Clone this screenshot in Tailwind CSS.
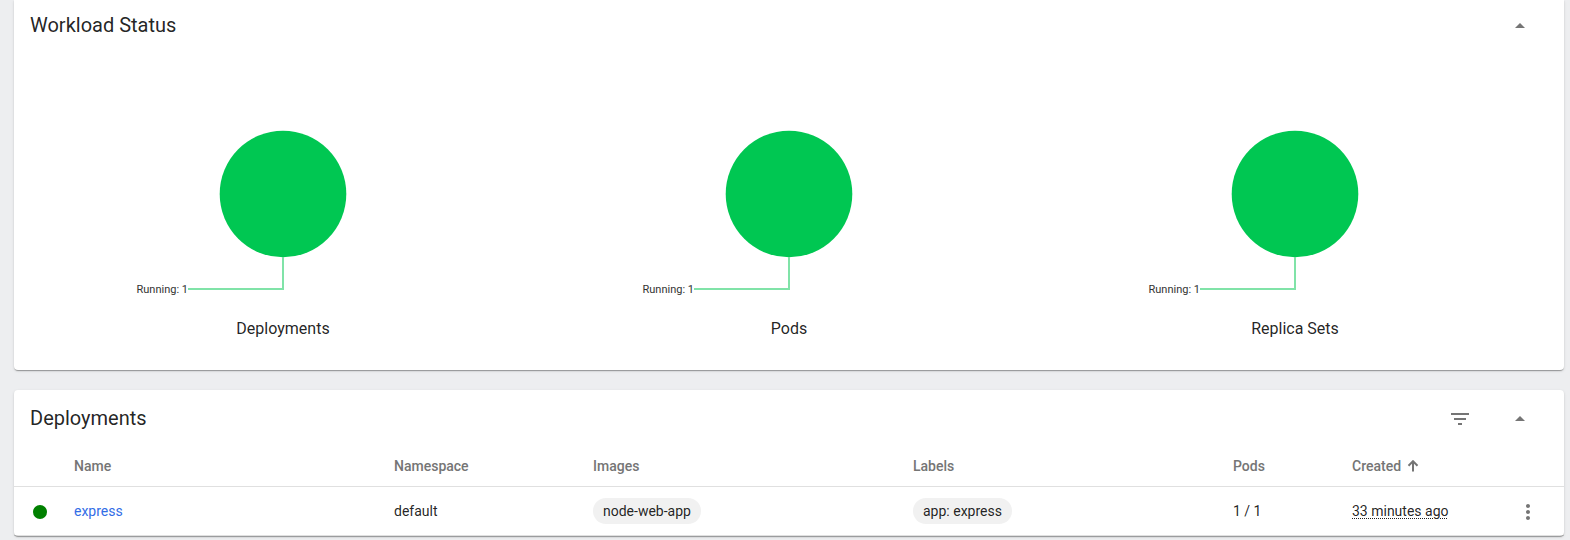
<!DOCTYPE html>
<html lang="en">
<head>
<meta charset="utf-8">
<meta name="viewport" content="width=device-width, initial-scale=1">
<title>Workloads</title>
<script src="https://cdn.jsdelivr.net/npm/@tailwindcss/browser@4"></script>
</head>
<body class="min-h-screen bg-[#edeef0] font-[Roboto,sans-serif] text-sm text-black/87">
<svg class="hidden" aria-hidden="true">
  <symbol id="collapse" viewBox="0 0 24 24"><path d="M7 14l5-5 5 5z"/></symbol>
  <symbol id="pie" viewBox="0 0 300 180">
    <circle cx="150" cy="73" r="63.3" fill="#00c752"/>
    <path d="M150 136V168H55" fill="none" stroke="#80e3a8" stroke-width="2"/>
  </symbol>
</svg>
<main class="flex flex-col gap-5 pr-1.5 pl-3.5">
  <section class="rounded-b bg-white shadow-[0_2px_1px_-1px_rgba(0,0,0,.2),0_1px_1px_rgba(0,0,0,.14),0_1px_3px_rgba(0,0,0,.12)]">
    <header class="flex h-[52px] items-center justify-between pr-6 pl-4">
      <h2 class="pb-0.5 text-xl">Workload Status</h2>
      <button type="button" aria-label="Collapse workload status" class="flex size-10 items-center justify-center text-[#757575]"><svg class="size-6 fill-current"><use href="#collapse"/></svg></button>
    </header>
    <div class="grid grid-cols-3 px-4 pt-[69px] pb-[29px]">
      <figure class="flex flex-col items-center gap-4">
        <svg class="h-[180px] w-[300px]" role="img" aria-label="Deployments, running: 1"><use href="#pie"/><text x="55" y="172" text-anchor="end" font-size="11" fill="#333">Running: 1</text></svg>
        <figcaption class="text-base">Deployments</figcaption>
      </figure>
      <figure class="flex flex-col items-center gap-4">
        <svg class="h-[180px] w-[300px]" role="img" aria-label="Pods, running: 1"><use href="#pie"/><text x="55" y="172" text-anchor="end" font-size="11" fill="#333">Running: 1</text></svg>
        <figcaption class="text-base">Pods</figcaption>
      </figure>
      <figure class="flex flex-col items-center gap-4">
        <svg class="h-[180px] w-[300px]" role="img" aria-label="Replica Sets, running: 1"><use href="#pie"/><text x="55" y="172" text-anchor="end" font-size="11" fill="#333">Running: 1</text></svg>
        <figcaption class="text-base">Replica Sets</figcaption>
      </figure>
    </div>
  </section>

  <section class="rounded bg-white shadow-[0_2px_1px_-1px_rgba(0,0,0,.2),0_1px_1px_rgba(0,0,0,.14),0_1px_3px_rgba(0,0,0,.12)]">
    <header class="flex h-14 items-center justify-between pr-6 pl-4">
      <h2 class="text-xl">Deployments</h2>
      <div class="flex gap-5 pt-0.5 text-[#757575]">
        <button type="button" aria-label="Filter" class="flex size-10 items-center justify-center"><svg class="size-6 fill-current" viewBox="0 0 24 24"><path d="M10 18h4v-2h-4v2zM3 6v2h18V6H3zm3 7h12v-2H6v2z"/></svg></button>
        <button type="button" aria-label="Collapse deployments" class="flex size-10 items-center justify-center"><svg class="size-6 fill-current"><use href="#collapse"/></svg></button>
      </div>
    </header>
    <table class="block w-full">
      <thead class="block">
        <tr class="grid h-[41px] grid-cols-[60px_320fr_199fr_320fr_320fr_119fr_152fr_60px] items-center border-b border-black/12 text-left text-[#757575]">
          <th aria-label="Status"></th>
          <th class="font-medium">Name</th>
          <th class="font-medium">Namespace</th>
          <th class="font-medium">Images</th>
          <th class="font-medium">Labels</th>
          <th class="font-medium">Pods</th>
          <th class="font-medium" aria-sort="ascending"><button type="button" class="flex items-center gap-1.5">Created
            <svg class="size-3" viewBox="0 0 12 12" fill="none" stroke="currentColor" stroke-width="2"><path d="M6 11.500V1.500M1.500 5.700L6 1.200L10.500 5.700"/></svg></button></th>
          <th aria-label="Actions"></th>
        </tr>
      </thead>
      <tbody class="block">
        <tr class="grid h-[49px] grid-cols-[60px_320fr_199fr_320fr_320fr_119fr_152fr_60px] items-center border-b border-black/12">
          <td class="pt-0.5 pl-[19px]"><svg class="size-3.5" viewBox="0 0 14 14" role="img" aria-label="Running"><circle cx="7" cy="7" r="7" fill="green"/></svg></td>
          <td><a href="#express" class="text-[#326de6]">express</a></td>
          <td>default</td>
          <td><span class="inline-flex h-[26px] items-center rounded-full bg-[#f1f1f1] px-2.5">node-web-app</span></td>
          <td><span class="inline-flex h-[26px] items-center rounded-full bg-[#f1f1f1] px-2.5">app: express</span></td>
          <td>1 / 1</td>
          <td><time class="underline decoration-dotted decoration-1 underline-offset-2">33 minutes ago</time></td>
          <td class="pt-0.5 pl-3"><button type="button" aria-label="Actions for express" class="block text-[#757575]"><svg class="size-6 fill-current" viewBox="0 0 24 24"><path d="M12 8c1.100 0 2-.9 2-2s-.9-2-2-2-2 .9-2 2 .9 2 2 2zm0 2c-1.100 0-2 .9-2 2s.9 2 2 2 2-.9 2-2-.9-2-2-2zm0 6c-1.100 0-2 .9-2 2s.9 2 2 2 2-.9 2-2-.9-2-2-2z"/></svg></button></td>
        </tr>
      </tbody>
    </table>
  </section>
</main>
</body>
</html>
